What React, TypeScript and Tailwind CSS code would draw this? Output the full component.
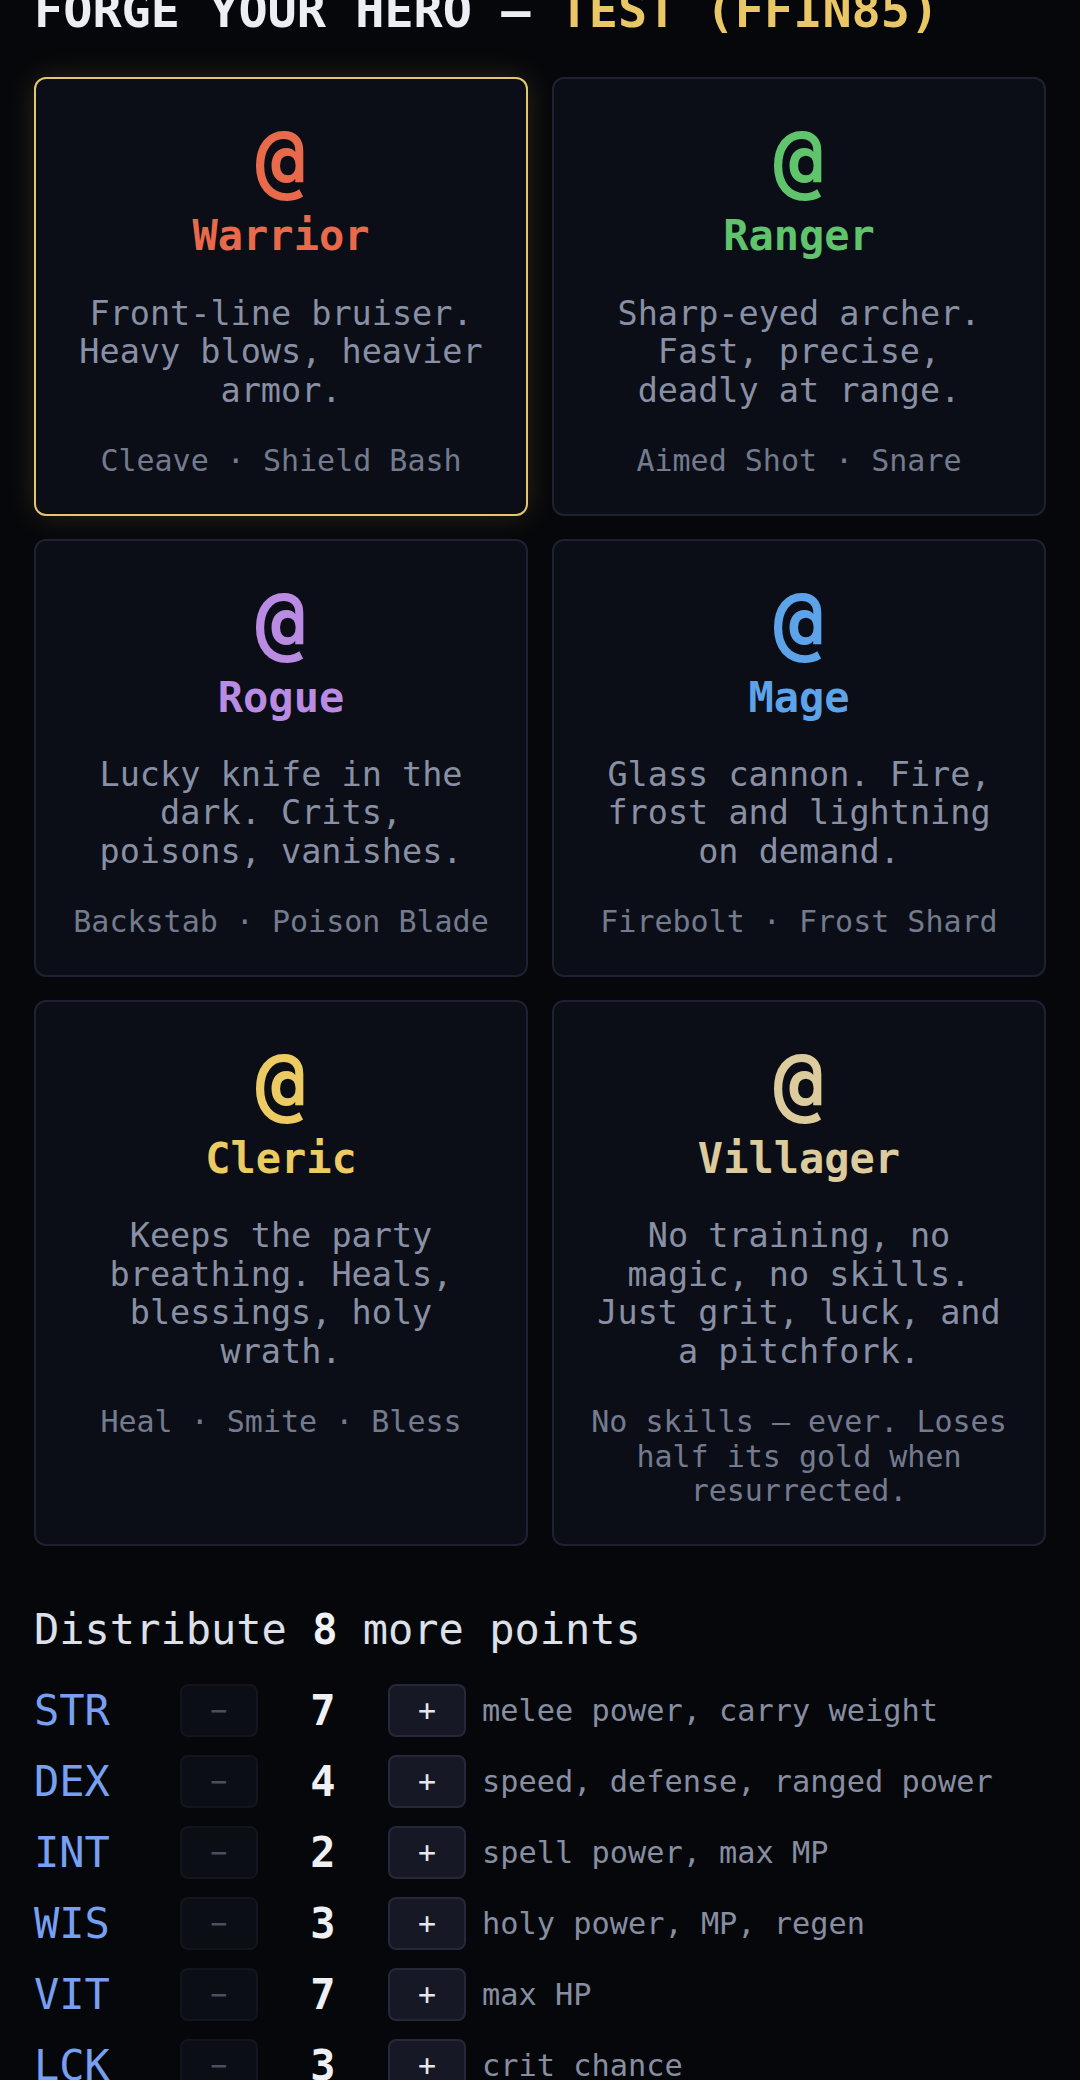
import { useState } from "react";

const heroes = [
    { name: "Warrior", color: "text-[#e86a4b]", desc: "Front-line bruiser. Heavy blows, heavier armor.", skills: "Cleave · Shield Bash" },
    { name: "Ranger", color: "text-[#5fc46c]", desc: "Sharp-eyed archer. Fast, precise, deadly at range.", skills: "Aimed Shot · Snare" },
    { name: "Rogue", color: "text-[#b98be3]", desc: "Lucky knife in the dark. Crits, poisons, vanishes.", skills: "Backstab · Poison Blade" },
    { name: "Mage", color: "text-[#5ca3ea]", desc: "Glass cannon. Fire, frost and lightning on demand.", skills: "Firebolt · Frost Shard" },
    { name: "Cleric", color: "text-[#ebcb62]", desc: "Keeps the party breathing. Heals, blessings, holy wrath.", skills: "Heal · Smite · Bless" },
    { name: "Villager", color: "text-[#dccb9c]", desc: "No training, no magic, no skills. Just grit, luck, and a pitchfork.", skills: "No skills — ever. Loses half its gold when resurrected." },
];

const initialStats = [
    { key: "STR", value: 7, hint: "melee power, carry weight" },
    { key: "DEX", value: 4, hint: "speed, defense, ranged power" },
    { key: "INT", value: 2, hint: "spell power, max MP" },
    { key: "WIS", value: 3, hint: "holy power, MP, regen" },
    { key: "VIT", value: 7, hint: "max HP" },
    { key: "LCK", value: 3, hint: "crit chance" },
];

function HeroForge() {
    const [selected, setSelected] = useState("Warrior");
    const [stats, setStats] = useState(initialStats);
    const [points, setPoints] = useState(8);

    function bump(key: string, delta: number) {
        if (delta > 0 && points <= 0) return;
        setStats(stats.map(s => s.key === key ? { ...s, value: s.value + delta } : s));
        setPoints(points - delta);
    }

    return (
        <div className="min-h-screen overflow-hidden bg-[#06070b] px-[34px] pb-[120px] font-['DejaVu_Sans_Mono',monospace]">
            <h1 className="-mt-[19px] text-[48.5px] leading-[1.2] font-bold text-[#eceef4]">
                FORGE YOUR HERO — <span className="text-[#e9c767]">TEST (FFIN85)</span>
            </h1>

            <div className="mt-[38px] grid grid-cols-2 gap-x-[24px] gap-y-[23px]">
                {heroes.map(h => (
                    <div
                        key={h.name}
                        onClick={() => setSelected(h.name)}
                        className={"flex flex-col items-center rounded-[12px] border-2 bg-[#0b0e16] px-[35px] pt-[38px] pb-[35px] text-center " + (
                            selected === h.name ?
                            "border-[#e3c66e] shadow-[0_0_30px_rgba(233,199,103,0.16)]" :
                            "border-[#1d2131]"
                        )}
                    >
                        <div className={"text-[84px] leading-none font-bold " + h.color}>@</div>
                        <div className={"mt-[10px] text-[42px] leading-[1.2] font-bold " + h.color}>{h.name}</div>
                        <p className="mt-[33px] text-[33.5px] leading-[38.5px] text-[#8990a5]">{h.desc}</p>
                        <p className="mt-[34px] text-[30px] leading-[34.5px] text-[#747b8f]">{h.skills}</p>
                    </div>
                ))}
            </div>

            <h2 className="mt-[59px] text-[42px] leading-[1.2] text-[#dde0e8]">
                Distribute <span className="font-bold text-[#f0f2f6]">{points}</span> more points
            </h2>

            <div className="mt-[29px] flex flex-col gap-[18px]">
                {stats.map(s => (
                    <div key={s.key} className="flex items-center gap-4">
                        <div className="w-[130px] text-[42px] leading-none text-[#78a0f2]">{s.key}</div>
                        <button
                            onClick={() => bump(s.key, -1)}
                            className="flex h-[53px] w-[78px] items-center justify-center rounded-[8px] border-2 border-[#12151e] bg-[#0c0e15] text-[28px] text-[#4a4f5e]"
                        >
                            −
                        </button>
                        <div className="w-[98px] text-center text-[42px] leading-none font-bold text-[#eef0f4]">{s.value}</div>
                        <button
                            onClick={() => bump(s.key, 1)}
                            className="flex h-[53px] w-[78px] items-center justify-center rounded-[8px] border-2 border-[#242838] bg-[#161925] text-[30px] text-[#e4e7ee]"
                        >
                            +
                        </button>
                        <div className="text-[30.3px] leading-none text-[#878ea2]">{s.hint}</div>
                    </div>
                ))}
            </div>
        </div>
    );
}

export default HeroForge
